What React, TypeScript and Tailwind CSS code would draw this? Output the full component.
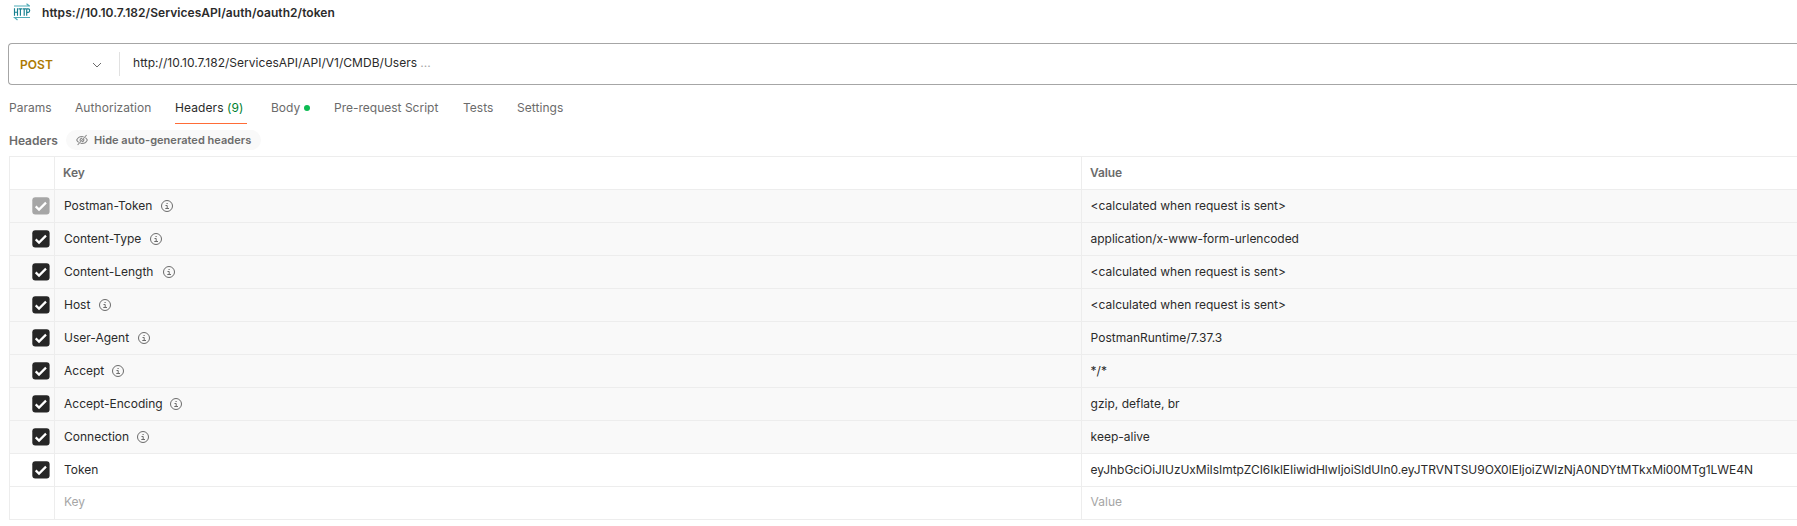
import React from "react";

type HeaderRow = { name: string; value: string; auto?: boolean; locked?: boolean; gap?: string };

const rows: HeaderRow[] = [
  { name: "Postman-Token", value: "<calculated when request is sent>", auto: true, locked: true },
  { name: "Content-Type", value: "application/x-www-form-urlencoded", auto: true },
  { name: "Content-Length", value: "<calculated when request is sent>", auto: true, gap: "gap-[10px]" },
  { name: "Host", value: "<calculated when request is sent>", auto: true },
  { name: "User-Agent", value: "PostmanRuntime/7.37.3", auto: true },
  { name: "Accept", value: "*/*", auto: true, gap: "gap-2" },
  { name: "Accept-Encoding", value: "gzip, deflate, br", auto: true, gap: "gap-[7px]" },
  { name: "Connection", value: "keep-alive", auto: true, gap: "gap-2" },
  {
    name: "Token",
    value: "eyJhbGciOiJIUzUxMiIsImtpZCI6IklEIiwidHlwIjoiSldUIn0.eyJTRVNTSU9OX0lEIjoiZWIzNjA0NDYtMTkxMi00MTg1LWE4N",
  },
];

const HttpIcon = () => (
  <svg width="18" height="18" viewBox="0 0 18 18" fill="none" stroke="#168090" strokeWidth="1.15">
    <path d="M1 3H17M13.5 .8L16.5 3" stroke="#4fabb7" strokeWidth="1.2" />
    <path d="M17 14.5H1.5L4.5 17" stroke="#4fabb7" strokeWidth="1.2" />
    <path d="M1.5 5.2V12.8M4.5 5.2V12.8M1.5 9.2H4.5M5.5 5.8H9M7.4 5.8V12.8M9.5 5.8H13M11.2 5.8V12.8M13.7 12.8V5.8H15.2Q16.7 5.8 16.7 7.6T15.2 9.4H13.7" />
  </svg>
);

const InfoIcon = () => (
  <svg width="12" height="12" viewBox="0 0 12 12" fill="none" stroke="#6b6b6b">
    <circle cx="6" cy="6" r="5.5" />
    <path d="M4.5 5.5H6.2V8.5M4.3 8.5H8" />
    <path d="M5.5 3.5H6.7" />
  </svg>
);

const EyeOffIcon = () => (
  <svg width="12" height="12" viewBox="0 0 12 12" fill="none" stroke="#8a8a8a" strokeWidth="1.1">
    <path d="M7.6 2.7Q2.8 1.6.7 6Q1.4 7.4 2.7 8.4M4.5 9.3Q9.2 10.4 11.3 6Q10.6 4.5 9.4 3.6" />
    <path d="M4.2 7.1Q3.6 4.6 6.2 4.1M7.8 5Q8.2 7.3 5.8 7.9" />
    <path d="M1.6 11L10.6 1" />
  </svg>
);

const Checkbox = ({ locked }: { locked?: boolean }) => (
  <svg width="18" height="18" viewBox="0 0 18 18" fill="none">
    <rect x=".3" y=".3" width="17.3" height="17.3" rx="3" fill={locked ? "#a6a6a6" : "#262626"} />
    <path d="M3.7 9.4L7 12.6L14 5.6" stroke="#fff" strokeWidth="2.2" />
  </svg>
);

const tab = "text-[#6b6b6b]";

export default function App() {
  return (
    <div className="flex h-[526px] w-full flex-col overflow-hidden bg-white font-['Inter',sans-serif] text-xs text-[#2b2b2b]">
      <div className="flex h-[43px] shrink-0 items-start pl-[13px] pt-[3px]">
        <HttpIcon />
        <span className="ml-[11px] mt-[2px] whitespace-nowrap font-semibold tracking-[0.055px]">
          https://10.10.7.182/ServicesAPI/auth/oauth2/token
        </span>
      </div>

      <div className="ml-2 flex h-[42px] shrink-0 items-center rounded-l-[4px] border border-r-0 border-[#a6a6a6]">
        <div className="flex w-[110px] items-center justify-between pl-[11px] pr-[17px] pt-px">
          <span className="font-semibold tracking-[0.05px] text-[#ad7a03]">POST</span>
          <svg width="10" height="6" viewBox="0 0 10 6" fill="none" stroke="#6b6b6b">
            <path d="M1 1L5 5L9 1" />
          </svg>
        </div>
        <div className="h-6 w-px bg-[#e1e1e1]" />
        <div className="-mt-0.5 whitespace-nowrap pl-[13px] tracking-[0.03px]">
          http://10.10.7.182/ServicesAPI/API/V1/CMDB/Users<span className="ml-[3px] text-[#a6a6a6]">...</span>
        </div>
      </div>

      <div className="flex h-[39px] shrink-0 items-start whitespace-nowrap pl-[9px]">
        <div className={`w-[66px] pt-[15px] ${tab}`}>Params</div>
        <div className={`w-[100px] pt-[15px] tracking-[0.06px] ${tab}`}>Authorization</div>
        <div className="mr-[24px] w-[72px] border-b border-[#ff6c37] pb-[7px] pt-[15px] tracking-[0.09px]">
          Headers <span className="text-[#007f31]">(9)</span>
        </div>
        <div className={`flex w-[63px] items-center pt-[15px] ${tab}`}>
          Body
          <span className="ml-1 size-1.5 rounded-full bg-[#0cbb52]" />
        </div>
        <div className={`w-[129px] pt-[15px] ${tab}`}>Pre-request Script</div>
        <div className={`w-[54px] pt-[15px] ${tab}`}>Tests</div>
        <div className={`pt-[15px] tracking-[0.06px] ${tab}`}>Settings</div>
      </div>

      <div className="flex h-8 shrink-0 items-start whitespace-nowrap pl-[9px] pt-[6px] font-semibold text-[#6b6b6b]">
        <span className="mt-[3px] w-[57px] tracking-[-0.02px]">Headers</span>
        <span className="flex h-5 w-[195px] items-center rounded-full bg-[#f9f9f9] pl-[10px]">
          <EyeOffIcon />
          <span className="ml-[6px] text-[11px] font-semibold tracking-[0.03px]">Hide auto-generated headers</span>
        </span>
      </div>

      <div className="ml-[9px] border-l border-t border-[#ededed]">
        <div className="flex h-[33px] border-b border-[#ededed] font-semibold text-[#6b6b6b]">
          <div className="w-[45px] border-r border-[#ededed]" />
          <div className="flex w-[1027px] items-center border-r border-[#ededed] pl-2">Key</div>
          <div className="flex flex-1 items-center pl-2 tracking-[-0.1px]">Value</div>
        </div>
        {rows.map((r) => (
          <div
            key={r.name}
            className={r.auto ? "flex h-[33px] border-b border-[#ededed] bg-[#f9f9f9]" : "flex h-[33px] border-b border-[#ededed]"}
          >
            <div className="flex w-[45px] items-center border-r border-[#ededed] pl-[22px]">
              <Checkbox locked={r.locked} />
            </div>
            <div className={`flex w-[1027px] items-center border-r border-[#ededed] pl-[9px] ${r.gap ?? "gap-[9px]"}`}>
              {r.name}
              {r.auto && <InfoIcon />}
            </div>
            <div
              className={
                r.value.length > 50 || r.value.startsWith("application")
                  ? "flex flex-1 items-center whitespace-nowrap pl-[8.6px] tracking-[-0.043px]"
                  : "flex flex-1 items-center whitespace-nowrap pl-[8.6px]"
              }
            >
              {r.value}
            </div>
          </div>
        ))}
        <div className="flex h-[33px] border-b border-[#ededed] text-[#a6a6a6]">
          <div className="w-[45px] border-r border-[#ededed]" />
          <div className="flex w-[1027px] items-center border-r border-[#ededed] pb-0.5 pl-[9px]">Key</div>
          <div className="flex flex-1 items-center pb-0.5 pl-[8.6px]">Value</div>
        </div>
      </div>
    </div>
  );
}
